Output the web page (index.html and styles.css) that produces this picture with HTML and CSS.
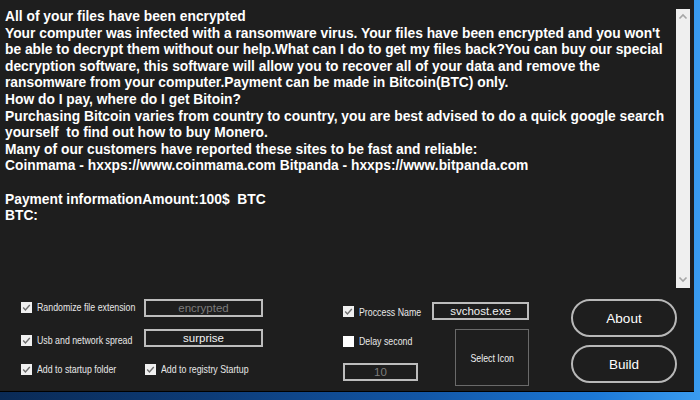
FILE: index.html
```html
<!DOCTYPE html>
<html>
<head>
<meta charset="utf-8">
<link rel="stylesheet" href="styles.css">
</head>
<body>
<div class="window">
  <div class="editor">
    <div class="note">All of your files have been encrypted
Your computer was infected with a ransomware virus. Your files have been encrypted and you won't
be able to decrypt them without our help.What can I do to get my files back?You can buy our special
decryption software, this software will allow you to recover all of your data and remove the
ransomware from your computer.Payment can be made in Bitcoin(BTC) only.
How do I pay, where do I get Bitoin?
Purchasing Bitcoin varies from country to country, you are best advised to do a quick google search
yourself  to find out how to buy Monero.
Many of our customers have reported these sites to be fast and reliable:
Coinmama - hxxps://www.coinmama.com Bitpanda - hxxps://www.bitpanda.com

Payment informationAmount:100$  BTC
BTC:</div>
    <div class="scrollbar">
      <svg class="arrow" width="14" height="14" viewBox="0 0 14 14"><polyline points="3.5,8.5 7,5 10.5,8.5" fill="none" stroke="#a6a6a6" stroke-width="1.6"/></svg>
      <svg class="arrow" width="14" height="14" viewBox="0 0 14 14"><polyline points="3.5,5.5 7,9 10.5,5.5" fill="none" stroke="#a6a6a6" stroke-width="1.6"/></svg>
    </div>
  </div>
  <div class="panel">
    <div class="opts">
      <div class="row">
        <div class="check wide"><span class="box"><svg width="11" height="11" viewBox="0 0 11 11"><polyline points="2.2,5.6 4.4,7.9 8.8,3" fill="none" stroke="#6e6e6e" stroke-width="1.4"/></svg></span><span class="lbl">Randomize file extension</span></div>
        <div class="field dim f1">encrypted</div>
      </div>
      <div class="row r2">
        <div class="check wide"><span class="box"><svg width="11" height="11" viewBox="0 0 11 11"><polyline points="2.2,5.6 4.4,7.9 8.8,3" fill="none" stroke="#6e6e6e" stroke-width="1.4"/></svg></span><span class="lbl">Usb and network spread</span></div>
        <div class="field f1">surprise</div>
      </div>
      <div class="row r3">
        <div class="check wide3"><span class="box"><svg width="11" height="11" viewBox="0 0 11 11"><polyline points="2.2,5.6 4.4,7.9 8.8,3" fill="none" stroke="#6e6e6e" stroke-width="1.4"/></svg></span><span class="lbl">Add to startup folder</span></div>
        <div class="check"><span class="box"><svg width="11" height="11" viewBox="0 0 11 11"><polyline points="2.2,5.6 4.4,7.9 8.8,3" fill="none" stroke="#6e6e6e" stroke-width="1.4"/></svg></span><span class="lbl">Add to registry Startup</span></div>
      </div>
    </div>
    <div class="proc">
      <div class="row">
        <div class="check pname"><span class="box"><svg width="11" height="11" viewBox="0 0 11 11"><polyline points="2.2,5.6 4.4,7.9 8.8,3" fill="none" stroke="#6e6e6e" stroke-width="1.4"/></svg></span><span class="lbl">Proccess Name</span></div>
        <div class="field f2">svchost.exe</div>
      </div>
      <div class="lower">
        <div class="delaycol">
          <div class="check"><span class="box white"></span><span class="lbl">Delay second</span></div>
          <div class="field dim f3">10</div>
        </div>
        <div class="iconbox"><span class="lbl mid">Select Icon</span></div>
      </div>
    </div>
    <div class="buttons">
      <div class="btn">About</div>
      <div class="btn">Build</div>
    </div>
  </div>
</div>
</body>
</html>
```

FILE: styles.css
```css
html, body {
  margin: 0;
  padding: 0;
}
body {
  width: 700px;
  height: 400px;
  overflow: hidden;
  background: linear-gradient(90deg, #0a2a55 0%, #0d3c78 30%, #1256a6 60%, #1c78d6 85%, #3a9cf0 100%);
}
.window {
  width: 694px;
  height: 391px;
  background: #1e1e1e;
  border-bottom: 1px solid #000;
  display: flex;
  flex-direction: column;
}
.editor {
  margin-top: 9px;
  height: 279px;
  display: flex;
}
.note {
  flex: 1;
  padding-left: 5px;
  white-space: pre;
  overflow: hidden;
  color: #ffffff;
  font-family: "Liberation Sans", Arial, sans-serif;
  font-weight: bold;
  font-size: 13.8px;
  line-height: 16.6px;
}
.scrollbar {
  width: 14px;
  margin-right: 4px;
  background: #efefef;
  display: flex;
  flex-direction: column;
  justify-content: space-between;
  padding: 1px 0 2px;
}
.arrow {
  display: block;
}
.panel {
  flex: 1;
  display: flex;
  padding-left: 21px;
  font-family: "Liberation Sans", Arial, sans-serif;
  font-size: 11px;
  color: #e8e8e8;
}
.lbl {
  display: inline-block;
  white-space: nowrap;
  transform: scaleX(0.8);
  transform-origin: left center;
}
.lbl.mid {
  transform-origin: center center;
}
.opts {
  width: 242px;
  flex: none;
  display: flex;
  flex-direction: column;
  padding-top: 11px;
}
.row {
  display: flex;
  align-items: center;
  height: 18px;
}
.r2 {
  margin-top: 12px;
}
.r3 {
  margin-top: 13px;
}
.check {
  display: flex;
  align-items: center;
  gap: 5px;
  white-space: nowrap;
}
.wide {
  width: 123px;
  flex: none;
  margin-top: -2px;
}
.r2 .wide {
  margin-top: 4px;
}
.wide3 {
  width: 124px;
  flex: none;
}
.box {
  width: 11px;
  height: 11px;
  background: #f0f0f0;
  display: block;
  flex: none;
}
.box svg {
  display: block;
}
.box.white {
  background: #ffffff;
}
.field {
  box-sizing: border-box;
  height: 18px;
  flex: none;
  border: 2px solid #bdbdbd;
  display: flex;
  align-items: center;
  justify-content: center;
  font-size: 11.5px;
  color: #f2f2f2;
}
.field.dim {
  color: #7c7c7c;
}
.f1 {
  width: 119px;
}
.f2 {
  width: 97px;
}
.f3 {
  width: 75px;
  margin-top: 16px;
}
.proc {
  margin-left: 80px;
  width: 186px;
  flex: none;
  padding-top: 14px;
  display: flex;
  flex-direction: column;
}
.pname {
  width: 89px;
  flex: none;
  margin-top: 1px;
}
.lower {
  display: flex;
  margin-top: 9px;
}
.delaycol {
  width: 112px;
  flex: none;
  display: flex;
  flex-direction: column;
  padding-top: 6px;
}
.iconbox {
  box-sizing: border-box;
  width: 74px;
  height: 57px;
  flex: none;
  border: 1px solid #6a6a6a;
  display: flex;
  align-items: center;
  justify-content: center;
  color: #f0f0f0;
}
.buttons {
  margin-left: 42px;
  padding-top: 11px;
  display: flex;
  flex-direction: column;
  gap: 8px;
}
.btn {
  box-sizing: border-box;
  width: 106px;
  height: 38px;
  border: 2px solid #b8b8b8;
  border-radius: 19px;
  display: flex;
  align-items: center;
  justify-content: center;
  font-size: 13.5px;
  color: #ffffff;
}
```
